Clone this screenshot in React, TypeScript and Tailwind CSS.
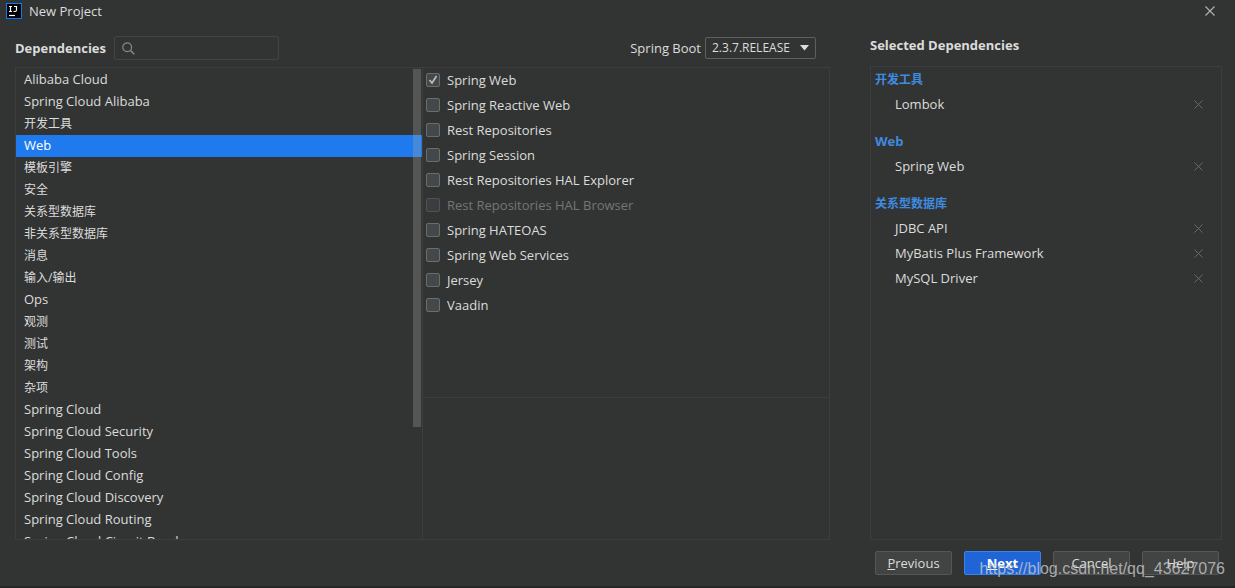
import { useState } from "react";
import clsx from "clsx";

const categories = [
  "Alibaba Cloud",
  "Spring Cloud Alibaba",
  "开发工具",
  "Web",
  "模板引擎",
  "安全",
  "关系型数据库",
  "非关系型数据库",
  "消息",
  "输入/输出",
  "Ops",
  "观测",
  "测试",
  "架构",
  "杂项",
  "Spring Cloud",
  "Spring Cloud Security",
  "Spring Cloud Tools",
  "Spring Cloud Config",
  "Spring Cloud Discovery",
  "Spring Cloud Routing",
  "Spring Cloud Circuit Breaker",
];

const webDependencies = [
  { name: "Spring Web" },
  { name: "Spring Reactive Web" },
  { name: "Rest Repositories" },
  { name: "Spring Session" },
  { name: "Rest Repositories HAL Explorer" },
  { name: "Rest Repositories HAL Browser", disabled: true },
  { name: "Spring HATEOAS" },
  { name: "Spring Web Services" },
  { name: "Jersey" },
  { name: "Vaadin" },
];

const selectedGroups = [
  { title: "开发工具", items: ["Lombok"] },
  { title: "Web", items: ["Spring Web"] },
  { title: "关系型数据库", items: ["JDBC API", "MyBatis Plus Framework", "MySQL Driver"] },
];

// Chinese labels are set one size smaller than the Latin ones
const isChinese = (text: string) => /[\u4e00-\u9fff]/.test(text);

function Logo() {
  return (
    <svg width="16" height="16" viewBox="0 0 16 16" aria-hidden="true">
      <rect width="16" height="16" fill="#087cfa" />
      <rect x="1" y="1" width="14" height="14" fill="#000" />
      <path d="M3 3.5h3M4.5 3.5v5M3 8.5h3M8 3.5h3M10.5 3v4q0 1.5-1.5 1.5H7.5" fill="none" stroke="#fff" strokeWidth="1.2" />
      <path d="M3 12.5h6" stroke="#fff" strokeWidth="1.2" />
    </svg>
  );
}

function Cross({ size }: { size: number }) {
  return (
    <svg width={size} height={size} viewBox="0 0 10 10" aria-hidden="true">
      <path d="M0.5 0.5l9 9M9.5 0.5l-9 9" stroke="currentColor" strokeWidth="1.1" />
    </svg>
  );
}

function Checkbox({ name, disabled, checked, onChange }: { name: string; disabled?: boolean; checked: boolean; onChange: () => void }) {
  return (
    <label className={clsx("flex h-[25px] items-center gap-[7px] pb-px", disabled && "text-[#747676]")}>
      <span className="relative flex">
        <input
          type="checkbox"
          checked={checked}
          disabled={disabled}
          onChange={onChange}
          className="size-[14px] appearance-none rounded-xs border border-[#6b6d6d] bg-[#43494a] disabled:border-[#505253] disabled:bg-[#3b3e40]"
        />
        {checked && (
          <svg className="pointer-events-none absolute inset-0" width="14" height="14" viewBox="0 0 14 14" aria-hidden="true">
            <path d="M3.5 7l2.5 3 4.5-7" fill="none" stroke="#b8b8b8" strokeWidth="1.8" />
          </svg>
        )}
      </span>
      {name}
    </label>
  );
}

export default function App() {
  const [category, setCategory] = useState("Web");
  const [checked, setChecked] = useState(["Spring Web"]);
  const [query, setQuery] = useState("");

  const toggle = (name: string) =>
    setChecked(checked.includes(name) ? checked.filter((n) => n !== name) : [...checked, name]);

  const button = "h-6 w-[77px] rounded-xs border border-[#555757] bg-[#424343]";

  return (
    <div className="relative flex h-screen flex-col overflow-hidden border-b-2 border-[#252626] bg-[#323433] font-['Open_Sans','Noto_Sans_CJK_SC',sans-serif] text-[13px] leading-5 text-[#dcdcdc]">
      <header className="flex h-6 shrink-0 items-center gap-[7px] pr-5 pb-0.5 pl-[6px]">
        <Logo />
        <h1 className="flex-1">New Project</h1>
        <button aria-label="Close" className="text-[#b4b6b6]">
          <Cross size={10} />
        </button>
      </header>

      <main className="flex min-h-0 flex-1 gap-10 pr-[13px] pl-[15px]">
        <section className="flex min-w-0 flex-1 flex-col">
          <div className="flex h-[43px] shrink-0 items-center pt-1">
            <label htmlFor="search" className="font-bold">
              Dependencies
            </label>
            <div className="relative ml-2">
              <svg className="absolute top-[6px] left-2 text-[#85898b]" width="13" height="13" viewBox="0 0 13 13" aria-hidden="true">
                <circle cx="5.2" cy="5.2" r="4.4" fill="none" stroke="currentColor" strokeWidth="1.2" />
                <path d="M8.5 8.5l3.7 3.7" stroke="currentColor" strokeWidth="1.6" />
              </svg>
              <input
                id="search"
                value={query}
                onChange={(e) => setQuery(e.target.value)}
                className="block h-6 w-[165px] rounded-xs border border-[#434545] pr-2 pl-7 outline-none"
              />
            </div>
            <label htmlFor="version" className="ml-auto">
              Spring Boot
            </label>
            <div className="relative mr-[14px] ml-1">
              <select id="version" className="block h-[22px] w-[111px] appearance-none rounded-xs border border-[#5e6060] pl-[6px] text-xs outline-none">
                <option>2.3.7.RELEASE</option>
              </select>
              <svg className="pointer-events-none absolute top-2 right-[7px]" width="9" height="6" viewBox="0 0 9 6" aria-hidden="true">
                <path d="M0 0h9L4.5 5.5z" fill="#dcdcdc" />
              </svg>
            </div>
          </div>

          <div className="flex min-h-0 flex-1 border border-[#3c3e3e]">
            <div className="relative flex-1 overflow-hidden pt-px">
              <ul>
                {categories.map((name) => (
                  <li key={name}>
                    <button
                      onClick={() => setCategory(name)}
                      className={clsx(
                        "block h-[22px] w-full px-2 text-left",
                        isChinese(name) ? "text-xs" : "pb-0.5",
                        name === category && "bg-[#1f7bed] text-white"
                      )}
                    >
                      {name}
                    </button>
                  </li>
                ))}
              </ul>
              <div className="absolute top-px right-px h-[76%] w-2 bg-[#a6a6a6]/30" />
            </div>
            <div className="flex flex-1 flex-col border-l border-[#3c3e3e]">
              <div className="flex-7 border-b border-[#3c3e3e] pl-[3px]">
                {webDependencies.map((dep) => (
                  <Checkbox
                    key={dep.name}
                    name={dep.name}
                    disabled={dep.disabled}
                    checked={checked.includes(dep.name)}
                    onChange={() => toggle(dep.name)}
                  />
                ))}
              </div>
              <div className="flex-3" />
            </div>
          </div>
        </section>

        <section className="flex w-[352px] flex-col">
          <h2 className="flex h-[42px] shrink-0 items-center font-bold">Selected Dependencies</h2>
          <div className="flex min-h-0 flex-1 flex-col gap-3 border border-[#3c3e3e] pr-[18px] pl-1">
            {selectedGroups.map((group) => (
              <div key={group.title}>
                <h3 className={clsx("font-bold leading-[25px] text-[#3f8be0]", isChinese(group.title) && "text-xs")}>{group.title}</h3>
                <ul>
                  {group.items.map((item) => (
                    <li key={item} className="flex h-[25px] items-center justify-between pb-px pl-5">
                      {item}
                      <button aria-label={`Remove ${item}`} className="text-[#686b6c]">
                        <Cross size={9} />
                      </button>
                    </li>
                  ))}
                </ul>
              </div>
            ))}
          </div>
        </section>
      </main>

      <footer className="flex shrink-0 justify-end gap-3 pt-[11px] pr-4 pb-[11px]">
        <button className={button}>
          <u>P</u>revious
        </button>
        <button className="h-6 w-[77px] rounded-xs border border-[#3b82e8] bg-[#2065d8] font-bold text-white">
          <u>N</u>ext
        </button>
        <button className={button}>Cancel</button>
        <button className={button}>Help</button>
      </footer>

      <p className="pointer-events-none absolute right-[10px] bottom-[7px] font-['Liberation_Sans',sans-serif] text-base leading-5 text-[#c8c8c8]/80">
        https://blog.csdn.net/qq_43627076
      </p>
    </div>
  );
}
